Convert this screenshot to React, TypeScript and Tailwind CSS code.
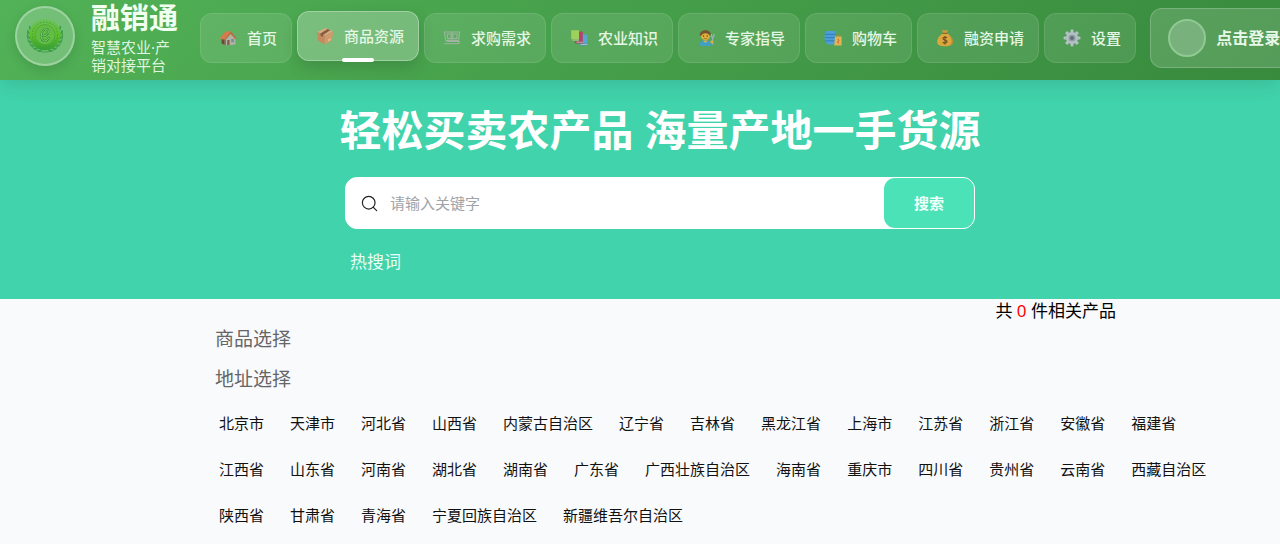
import React from "react";
import { Search } from "lucide-react";

function HomeIcon() {
  return (
    <svg viewBox="0 0 18 18" className="h-[18px] w-[18px]" aria-hidden="true">
      <path d="M2 9.4 L6 9 L8.4 16.4 L2 14.4 Z" fill="#8a6a58" />
      <path d="M7 10 L12 5 L16.4 9.6 V15.4 L7 16.4 Z" fill="#b7b4ae" />
      <path d="M0.6 9.6 L6.4 2.6 L12 2.2 L6.2 10.4 Z" fill="#e2764a" />
      <path d="M12 2.2 L17.6 9.4 L16.2 10.2 L11.6 4.8 L6.6 10.8 L5.8 10.2 Z" fill="#cf5f3e" />
      <path d="M3 10.8 H5.2 V15.4 L3 14.8 Z" fill="#6b4334" />
      <path d="M8.2 11 H10.6 V16 L8.2 16.3 Z" fill="#8a5646" />
      <rect x="12.2" y="10" width="2.8" height="3.2" fill="#7f8f96" />
    </svg>
  );
}

function BoxIcon() {
  return (
    <svg viewBox="0 0 18 18" className="h-[18px] w-[18px]" aria-hidden="true">
      <path d="M1 5 L9.5 1 L17 4.4 L9 8.6 Z" fill="#e3a981" />
      <path d="M1 5 L9 8.6 L8.6 17.4 L2 13.6 Z" fill="#d0845c" />
      <path d="M9 8.6 L17 4.4 L16 13.4 L8.6 17.4 Z" fill="#dd9468" />
      <path d="M4.4 6.6 L11.6 2 L14.2 3.2 L7 8 V10 L4.6 8.8 Z" fill="#8a5140" />
      <path d="M12 12.6 L14.6 11.2 V13 L12 14.4 Z" fill="#eebf9c" />
    </svg>
  );
}

function DemandIcon() {
  return (
    <svg viewBox="0 0 18 18" className="h-[18px] w-[18px]" fill="none" stroke="#a7b5a9" strokeWidth="1.1" aria-hidden="true">
      <path d="M1.4 3 H16.6 L15.6 11.6 H2.8 Z" />
      <path d="M4.2 5 H8 V9.6 H4.8 Z M10 5 H14.2 L13.8 9.6 H10 Z" />
      <path d="M8.9 3 V11.6" />
      <path d="M1 14.8 H14.8 C17 14.8 17 12.4 15 12.4 H4" />
    </svg>
  );
}

function BooksIcon() {
  return (
    <svg viewBox="0 0 18 18" className="h-[18px] w-[18px]" aria-hidden="true">
      <path d="M11.6 5.6 H17.4 V15 H11.6 Z" fill="#5da5dc" />
      <path d="M9.4 14.2 H17.4 V16.6 H10.4 Z" fill="#4b8ac8" />
      <path d="M7.6 2.6 H12.8 V13 H7.6 Z" fill="#c0386e" />
      <path d="M4.4 12 H13 V14.4 H5.6 Z" fill="#a83462" />
      <path d="M1.2 1.2 H9 V10.4 H1.2 Z" fill="#a6d65c" />
      <path d="M1 10.2 H9 V12.2 H2 Z" fill="#6d9e46" />
      <path d="M2.2 11 H9 M6.4 13.2 H13 M10.6 15.4 H17.4" stroke="#e6ebe2" strokeWidth="0.7" />
    </svg>
  );
}

function ExpertIcon() {
  return (
    <svg viewBox="0 0 18 18" className="h-[18px] w-[18px]" aria-hidden="true">
      <circle cx="8.4" cy="6.6" r="4.6" fill="#f3b23c" />
      <path d="M2.8 6.4 C2.4 -0.6 14.4 -0.6 14 6.4 L12.4 6.6 C11.2 3.8 6 3.4 4.4 6.8 Z" fill="#7a4a2c" />
      <circle cx="6.6" cy="7" r="0.7" fill="#5b3420" />
      <circle cx="10.2" cy="7" r="0.7" fill="#5b3420" />
      <path d="M6.8 9.2 Q8.4 10.4 10 9.2" stroke="#9a5a24" strokeWidth="0.8" fill="none" />
      <path d="M2.6 17 C2.6 12.4 5 11.2 8.4 11.2 C11.8 11.2 14 12.6 14 17 Z" fill="#3f9fd0" />
      <path d="M6 11.4 L8.4 14 L10.8 11.4 Z" fill="#f3b23c" />
      <path d="M14.4 5 V8 M16.8 5 V8 M14.4 8 H16.8 M15.6 8 V15.6" stroke="#9fb4c4" strokeWidth="1.3" fill="none" />
      <circle cx="14.8" cy="13" r="1.4" fill="#f3b23c" />
    </svg>
  );
}

function CartIcon() {
  return (
    <svg viewBox="0 0 18 18" className="h-[18px] w-[18px]" aria-hidden="true">
      <path d="M2 2 H11.6 V15.6 H3.4 L0.6 11 V5 Z" fill="#4b9fe6" />
      <path d="M1 5.4 H11.6 M1 8.6 H11.6 M1.4 11.8 H11.6" stroke="#2e74c4" strokeWidth="0.9" />
      <path d="M11 7.6 H17.6 V16.4 H10.2 Z" fill="#efb755" />
      <path d="M12.6 7.6 V6.2 H15.8 V7.6" stroke="#c4873a" strokeWidth="0.9" fill="none" />
      <path d="M13.8 9.8 L15 11.6 L13.6 12.6 L14.6 14.4" stroke="#d0552f" strokeWidth="1" fill="none" />
    </svg>
  );
}

function MoneyIcon() {
  return (
    <svg viewBox="0 0 18 18" className="h-[18px] w-[18px]" aria-hidden="true">
      <path d="M6 0.8 L9 1.6 L12 0.8 L10.8 4.2 H7.2 Z" fill="#d9a03c" />
      <path d="M7 4 H11 C14.4 6.4 17 9.6 16.8 13 C16.6 16.2 14 17.2 9 17.2 C4 17.2 1.4 16.2 1.2 13 C1 9.6 3.6 6.4 7 4 Z" fill="#e9a93d" />
      <path d="M12.4 5.2 C15 8 16.4 10.8 15.4 14.4 C14.6 16.6 12 17 9 17.2 C14 17.2 16.6 16.2 16.8 13 C17 9.6 14.8 7 12.4 5.2 Z" fill="#c67f29" />
      <path d="M6.6 4.4 H11.4" stroke="#93602a" strokeWidth="1.2" />
      <path d="M11 8.8 C10 7.6 7 7.8 7 9.6 C7 11.6 11 10.6 11 12.6 C11 14.6 7.8 14.6 6.8 13.2 M9 7 V15.6" stroke="#7a4b1c" strokeWidth="1.2" fill="none" />
    </svg>
  );
}

function GearIcon() {
  return (
    <svg viewBox="0 0 18 18" className="h-[18px] w-[18px]" aria-hidden="true">
      <g fill="#c0c4d2">
        <rect x="7.5" y="0.6" width="3" height="16.8" rx="0.8" />
        <rect x="7.5" y="0.6" width="3" height="16.8" rx="0.8" transform="rotate(45 9 9)" />
        <rect x="7.5" y="0.6" width="3" height="16.8" rx="0.8" transform="rotate(90 9 9)" />
        <rect x="7.5" y="0.6" width="3" height="16.8" rx="0.8" transform="rotate(135 9 9)" />
        <circle cx="9" cy="9" r="6" />
      </g>
      <circle cx="9" cy="9" r="3.6" fill="#9a9fb2" />
      <circle cx="9" cy="9" r="2" fill="#5f6f78" />
    </svg>
  );
}

function Emblem() {
  const leaves = [66, 82, 98, 114, 130, 146, 162];

  return (
    <svg viewBox="0 0 40 40" className="h-10 w-10" aria-hidden="true">
      <defs>
        <linearGradient id="coin" x1="0" y1="0" x2="0" y2="1">
          <stop offset="0" stopColor="#6cc25a" />
          <stop offset="0.5" stopColor="#62c02c" />
          <stop offset="1" stopColor="#349f36" />
        </linearGradient>
      </defs>
      <g fill="#3f9f48">
        {leaves.map((a) => (
          <g key={a}>
            <ellipse cx="20" cy="2.6" rx="1" ry="2.6" transform={`rotate(${a} 20 19) rotate(-50 20 2.6)`} />
            <ellipse cx="20" cy="2.6" rx="1" ry="2.6" transform={`rotate(${-a} 20 19) rotate(50 20 2.6)`} />
          </g>
        ))}
      </g>
      <path d="M3 14 C0 28 10 36 20 36 C30 36 40 28 37 14" fill="none" stroke="#3f9f48" strokeWidth="1" />
      <circle cx="20" cy="18.6" r="15.6" fill="url(#coin)" />
      <circle cx="20" cy="18.6" r="12.6" fill="none" stroke="#3f9c36" strokeWidth="1" strokeDasharray="1.4 1.6" />
      <circle cx="20" cy="18.6" r="10" fill="#62bd45" stroke="#48a338" strokeWidth="0.7" />
      <path
        d="M18 20 C21.4 20 24 17.4 23.2 14.8 C22.4 12 18.6 12.8 17 16.4 C15.4 20.4 16.6 24.8 19.6 25 C21.4 25 23 23.6 23.8 22"
        fill="none"
        stroke="#379236"
        strokeWidth="2.2"
        strokeLinecap="round"
      />
      <path
        d="M18 20 C21.4 20 24 17.4 23.2 14.8 C22.4 12 18.6 12.8 17 16.4 C15.4 20.4 16.6 24.8 19.6 25 C21.4 25 23 23.6 23.8 22"
        fill="none"
        stroke="#86cf78"
        strokeWidth="1"
        strokeLinecap="round"
      />
    </svg>
  );
}

const navItems = [
  { label: "首页", icon: <HomeIcon /> },
  { label: "商品资源", icon: <BoxIcon />, active: true },
  { label: "求购需求", icon: <DemandIcon /> },
  { label: "农业知识", icon: <BooksIcon /> },
  { label: "专家指导", icon: <ExpertIcon /> },
  { label: "购物车", icon: <CartIcon /> },
  { label: "融资申请", icon: <MoneyIcon /> },
  { label: "设置", icon: <GearIcon /> },
];

const regions = [
  "北京市", "天津市", "河北省", "山西省", "内蒙古自治区", "辽宁省", "吉林省", "黑龙江省",
  "上海市", "江苏省", "浙江省", "安徽省", "福建省", "江西省", "山东省", "河南省",
  "湖北省", "湖南省", "广东省", "广西壮族自治区", "海南省", "重庆市", "四川省", "贵州省",
  "云南省", "西藏自治区", "陕西省", "甘肃省", "青海省", "宁夏回族自治区", "新疆维吾尔自治区",
];

export default function App() {
  return (
    <div className="min-h-screen overflow-x-clip bg-[#f9fafc] font-['Noto_Sans','Noto_Sans_CJK_SC',sans-serif]">
      {/* Top bar */}
      <header className="relative z-10 flex items-center bg-linear-135 from-[#52b257] to-[#388a3d] pt-0.5 pb-1.5 pl-[15px] shadow-[0_4px_20px_rgba(0,0,0,0.12)]">
        <a href="#" className="flex shrink-0 items-start gap-4">
          <span className="mt-1 flex h-[60px] w-[60px] items-center justify-center rounded-full border-2 border-white/30 bg-white/20 shadow-[0_4px_12px_rgba(0,0,0,0.12)]">
            <Emblem />
          </span>
          <span className="flex w-[88px] flex-col gap-1">
            <span className="text-[29px] leading-8 font-bold text-[#f0fff0]">融销通</span>
            <span className="text-[15px] leading-[18px] text-[#dff5df]">智慧农业·产销对接平台</span>
          </span>
        </a>

        <nav className="ml-[21px] flex shrink-0 gap-[5px]">
          {navItems.map((item) => (
            <a
              key={item.label}
              href="#"
              aria-current={item.active ? "page" : undefined}
              className={
                item.active
                  ? "relative flex h-[50px] -translate-y-0.5 items-center gap-[10px] rounded-xl border border-white/30 bg-white/25 pr-[14px] pl-[18px] shadow-[0_6px_16px_rgba(0,0,0,0.15)]"
                  : "relative flex h-[50px] items-center gap-[10px] rounded-xl border border-white/10 bg-white/10 pr-[14px] pl-[18px]"
              }
            >
              <span className="opacity-90">{item.icon}</span>
              <span className="text-[15px] leading-5 font-medium text-[#e4f6e4]">{item.label}</span>
              {item.active && (
                <span className="absolute -bottom-0.5 left-1/2 h-1 w-8 -translate-x-1/2 rounded-sm bg-white" />
              )}
            </a>
          ))}
        </nav>

        <button
          type="button"
          className="ml-[14px] flex h-[60px] shrink-0 items-center gap-[10px] rounded-xl border border-white/20 bg-white/15 px-[17px]"
        >
          <span className="h-[38px] w-[38px] rounded-full border-2 border-[#8fca92] bg-white/20" />
          <span className="text-base leading-5 font-bold text-[#e8f8e8]">点击登录</span>
        </button>
      </header>

      {/* Search banner */}
      <section className="bg-[#41d3ab] pt-5 pb-6 pl-10">
        <h1 className="text-center text-[42px] leading-[60px] font-bold text-white">
          轻松买卖农产品 海量产地一手货源
        </h1>
        <div className="mx-auto mt-[17px] w-full max-w-[630px]">
          <form
            role="search"
            onSubmit={(e) => e.preventDefault()}
            className="flex h-[52px] rounded-xl border border-white bg-white"
          >
            <label htmlFor="keyword" aria-label="搜索" className="flex items-center pr-[11px] pl-[14px]">
              <Search size={19} strokeWidth={1.5} className="text-[#222]" />
            </label>
            <input
              id="keyword"
              type="text"
              placeholder="请输入关键字"
              className="min-w-0 flex-1 bg-transparent text-[15px] text-gray-800 outline-none placeholder:text-[#a0a3a8]"
            />
            <button type="submit" className="w-[90px] rounded-[11px] bg-[#4ce2b8] text-[15px] font-bold text-[#ecfff8]">
              搜索
            </button>
          </form>
          <p className="mt-5 pl-[5px] text-[17px] leading-[26px] text-[#e8fff6]">热搜词</p>
        </div>
      </section>

      {/* Filters */}
      <main className="pr-16 pl-[215px]">
        <p className="pr-[100px] text-right text-[17px] leading-6 text-black">
          共 <span className="text-[#f00]">0</span> 件相关产品
        </p>
        <div className="flex flex-col gap-2 text-[19px] leading-8 text-[#666]">
          <h2>商品选择</h2>
          <h2>地址选择</h2>
        </div>
        <ul className="flex flex-wrap gap-x-[26px] gap-y-[22px] pt-4 pl-1">
          {regions.map((name) => (
            <li key={name}>
              <a href="#" className="block text-[15px] leading-6 text-[#111]">
                {name}
              </a>
            </li>
          ))}
        </ul>
      </main>
    </div>
  );
}
